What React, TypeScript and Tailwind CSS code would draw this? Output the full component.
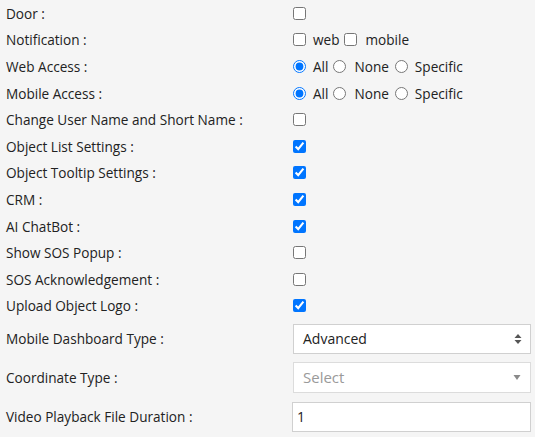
import React from "react";

const Check = ({ checked }: { checked?: boolean }) => (
  <input
    type="checkbox"
    defaultChecked={checked}
    className="m-0 w-[13px] h-[13px] accent-[#0075ff] shrink-0"
  />
);

const Radio = ({ checked, name }: { checked?: boolean; name: string }) => (
  <input
    type="radio"
    name={name}
    defaultChecked={checked}
    className="m-0 w-[13px] h-[13px] accent-[#0075ff] shrink-0"
  />
);

const Row = ({ label, children }: { label: string; children: React.ReactNode }) => (
  <div className="flex items-center h-[26.6px]">
    <div className="w-[287px] shrink-0">{label}</div>
    <div className="flex items-center">{children}</div>
  </div>
);

const TallRow = ({ label, children }: { label: string; children: React.ReactNode }) => (
  <div className="flex items-center h-[39px]">
    <div className="w-[287px] shrink-0">{label}</div>
    <div className="flex items-center">{children}</div>
  </div>
);

const RadioGroup = ({ name }: { name: string }) => (
  <>
    <Radio name={name} checked />
    <span className="ml-[7px] mr-[5px]">All</span>
    <Radio name={name} />
    <span className="ml-[8px] mr-[6px]">None</span>
    <Radio name={name} />
    <span className="ml-[7px]">Specific</span>
  </>
);

export default function App() {
  return (
    <div className="min-h-screen bg-[#f5f5f5] text-[13.6px] text-[#222] font-['Open_Sans',sans-serif] leading-[19px]">
      <div className="pl-[6px]">
        <Row label="Door :">
          <Check />
        </Row>
        <Row label="Notification :">
          <Check />
          <span className="ml-[7px] mr-[5px]">web</span>
          <Check />
          <span className="ml-[8px]">mobile</span>
        </Row>
        <Row label="Web Access :">
          <RadioGroup name="web" />
        </Row>
        <Row label="Mobile Access :">
          <RadioGroup name="mobile" />
        </Row>
        <Row label="Change User Name and Short Name :">
          <Check />
        </Row>
        <Row label="Object List Settings :">
          <Check checked />
        </Row>
        <Row label="Object Tooltip Settings :">
          <Check checked />
        </Row>
        <Row label="CRM :">
          <Check checked />
        </Row>
        <Row label="AI ChatBot :">
          <Check checked />
        </Row>
        <Row label="Show SOS Popup :">
          <Check />
        </Row>
        <Row label="SOS Acknowledgement :">
          <Check />
        </Row>
        <Row label="Upload Object Logo :">
          <Check checked />
        </Row>
        <TallRow label="Mobile Dashboard Type :">
          <div className="w-[238px] h-[30px] bg-white border border-[#d0d0d0] flex items-center justify-between pl-[9px] pr-[8px]">
            <span className="text-[#222] text-[14px]">Advanced</span>
            <svg width="8" height="12" viewBox="0 0 8 12">
              <path d="M4 1 L7.5 5 L0.5 5 Z" fill="#555" />
              <path d="M4 11 L7.5 7 L0.5 7 Z" fill="#555" />
            </svg>
          </div>
        </TallRow>
        <TallRow label="Coordinate Type :">
          <div className="w-[238px] h-[31px] bg-white border border-[#dcdcdc] flex items-center justify-between pl-[9px] pr-[9px]">
            <span className="text-[#9a9a9a] text-[15px]">Select</span>
            <svg width="8" height="7" viewBox="0 0 8 7">
              <path d="M0.5 1 L7.5 1 L4 6 Z" fill="#8a8a8a" />
            </svg>
          </div>
        </TallRow>
        <TallRow label="Video Playback File Duration :">
          <div className="w-[239px] h-[30px] bg-white border border-[#d0d0d0] flex items-center pl-[4px] -ml-[1px]">
            <span className="text-[#222] text-[14px]">1</span>
          </div>
        </TallRow>
      </div>
    </div>
  );
}
